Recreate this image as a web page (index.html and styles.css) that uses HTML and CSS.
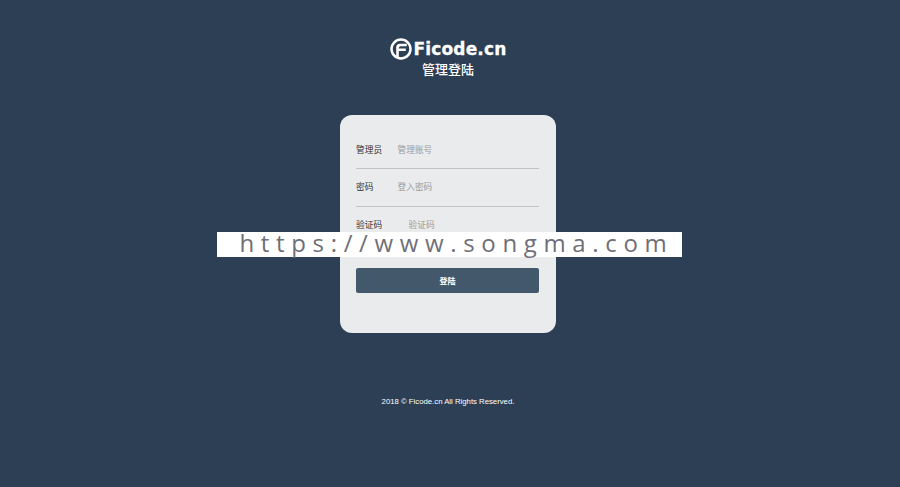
FILE: index.html
```html
<!DOCTYPE html>
<html lang="zh-CN">
<head>
<meta charset="utf-8">
<title>管理登陆</title>
<link rel="stylesheet" href="styles.css">
</head>
<body>
<div class="page">
  <header class="header">
    <div class="logo">
      <svg class="logo-icon" viewBox="0 0 22 22" width="22" height="22" aria-hidden="true">
        <circle cx="11" cy="11" r="9.500" fill="none" stroke="#fff" stroke-width="2.500"/>
        <path d="M6.200 18V9.500A3.700 3.700 0 0 1 9.900 5.800H16.800V8.200H10.800A2 2 0 0 0 8.800 10.200V10.600H15.800V13H8.800V19H6.200Z" fill="#fff"/>
      </svg>
      <span class="logo-text">Ficode.cn</span>
    </div>
    <h1 class="title">管理登陆</h1>
  </header>
  <main class="card">
    <div class="field"><span class="label">管理员</span><span class="hint">管理账号</span></div>
    <div class="field"><span class="label">密码</span><span class="hint">登入密码</span></div>
    <div class="field field-last"><span class="label">验证码</span><span class="hint hint-code">验证码</span></div>
    <button class="submit" type="button">登陆</button>
  </main>
  <footer class="footer">2018 © Ficode.cn All Rights Reserved.</footer>
</div>
<div class="banner">https://www.songma.com</div>
</body>
</html>
```
FILE: styles.css
```css
html, body {
  margin: 0;
  padding: 0;
  height: 100%;
}
body {
  background: #2c3f55;
  font-family: "Liberation Sans", "Noto Sans CJK SC", sans-serif;
  overflow: hidden;
  position: relative;
}
.page {
  display: flex;
  flex-direction: column;
  align-items: center;
  width: 896px;
}
.header {
  display: flex;
  flex-direction: column;
  align-items: center;
  padding-top: 38px;
}
.logo {
  display: flex;
  align-items: center;
  gap: 2px;
  height: 22px;
}
.logo-icon {
  display: block;
}
.logo-text {
  color: #fff;
  font-family: "DejaVu Sans", sans-serif;
  font-weight: 700;
  font-size: 17px;
  line-height: 22px;
  letter-spacing: 0.15px;
  -webkit-text-stroke: 0.3px #fff;
}
.title {
  margin: 0;
  color: #fff;
  font-family: "Noto Sans CJK SC", sans-serif;
  font-size: 13px;
  line-height: 18px;
  font-weight: 500;
}
.card {
  box-sizing: border-box;
  width: 216px;
  height: 218px;
  margin-top: 37px;
  padding: 16.500px 17px 0 16px;
  background: #e9ebed;
  border-radius: 12px;
  display: flex;
  flex-direction: column;
}
.field {
  display: flex;
  align-items: center;
  height: 37.500px;
  padding-bottom: 1.500px;
  box-sizing: border-box;
  border-bottom: 1px solid #c2c4c6;
  font-family: "Noto Sans CJK SC", sans-serif;
  font-size: 8.700px;
}
.field-last {
  height: 37px;
  border-bottom: 0;
}
.label {
  width: 41.500px;
  color: #333;
}
.hint {
  color: #9a9a9a;
}
.hint-code {
  margin-left: 11px;
}
.submit {
  height: 25px;
  margin-top: 24.500px;
  padding: 0;
  border: 0;
  border-radius: 2px;
  background: #44586c;
  color: #fff;
  font-family: "Noto Sans CJK SC", sans-serif;
  font-size: 8px;
  font-weight: 700;
}
.footer {
  margin-top: 64px;
  color: #fff;
  font-size: 7.750px;
  line-height: 10px;
}
.banner {
  position: absolute;
  left: 217px;
  top: 232px;
  box-sizing: border-box;
  width: 465px;
  height: 25px;
  padding-left: 22.500px;
  background: #fff;
  color: #6f6f78;
  font-family: "Open Sans", sans-serif;
  font-size: 24px;
  line-height: 22px;
  letter-spacing: 6.650px;
  white-space: nowrap;
}
```
